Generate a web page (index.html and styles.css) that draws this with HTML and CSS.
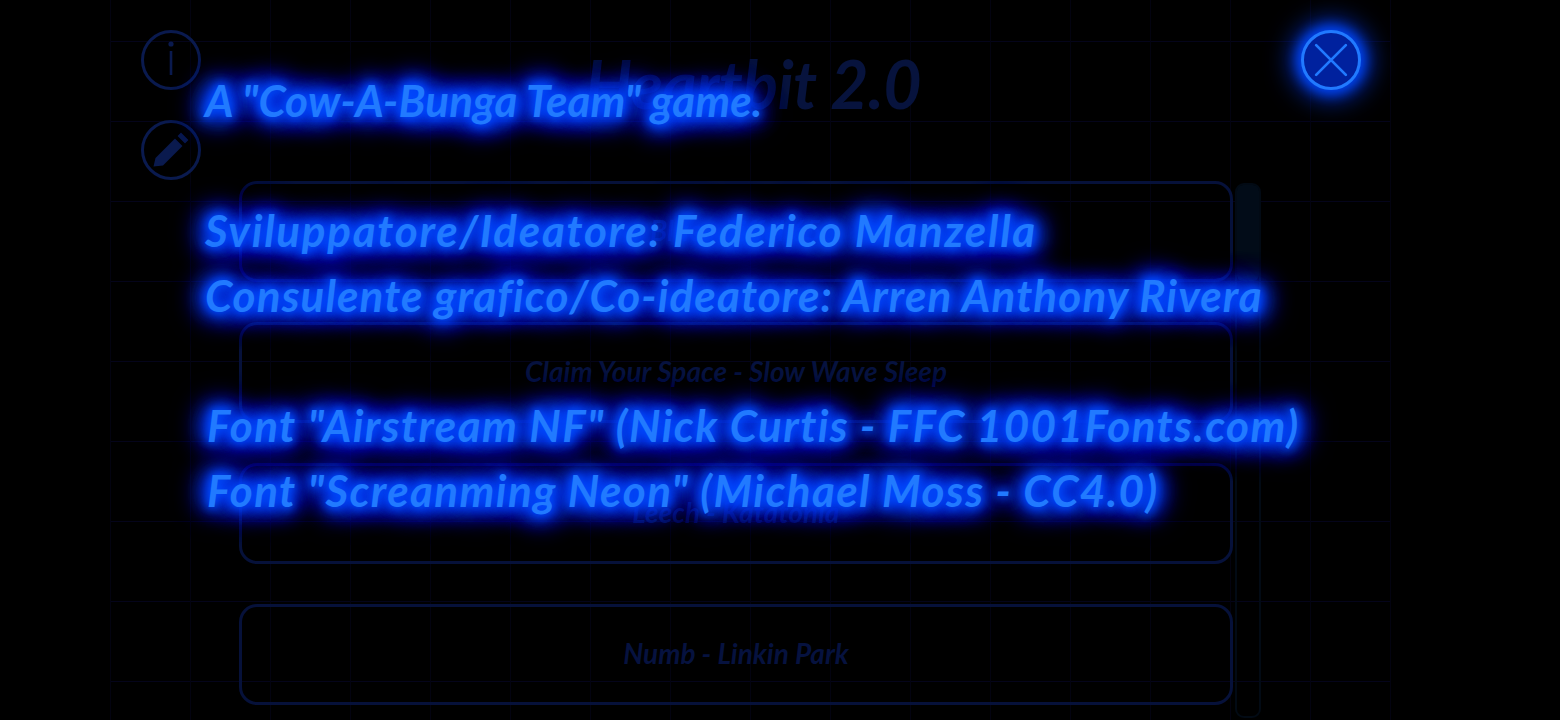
FILE: index.html
```html
<!DOCTYPE html>
<html lang="it">
<head>
<meta charset="utf-8">
<title>Heartbit 2.0</title>
<link rel="stylesheet" href="styles.css">
</head>
<body>
<div class="grid"></div>
<div class="page">
  <div class="rail">
    <div class="round">
      <svg viewBox="0 0 60 60" class="icon"><circle cx="30" cy="30" r="28.5" class="ring"/><circle cx="30" cy="14" r="2.6" class="fill"/><rect x="28.7" y="21" width="2.6" height="24" class="fill"/></svg>
    </div>
    <div class="round">
      <svg viewBox="0 0 60 60" class="icon"><circle cx="30" cy="30" r="28.5" class="ring"/><path d="M12.5 46.5 L14.5 38 L34 18.5 L41.5 26 L22 45.5 Z M36.5 16 L40 12.5 L47.5 20 L44 23.5 Z" class="fill"/></svg>
    </div>
  </div>
  <main class="main">
    <h1 class="title">Heartbit 2.0</h1>
    <div class="scroller">
      <ul class="songs">
        <li class="song">Blue - Eiffel 65</li>
        <li class="song">Claim Your Space - Slow Wave Sleep</li>
        <li class="song">Leech - Katatonia</li>
        <li class="song">Numb - Linkin Park</li>
      </ul>
      <div class="bar"><div class="thumb"></div></div>
    </div>
  </main>
</div>
<section class="credits">
  <p class="line l1 gap">A "Cow-A-Bunga Team" game.</p>
  <p class="line l2">Sviluppatore/Ideatore: Federico Manzella</p>
  <p class="line l3 gap">Consulente grafico/Co-ideatore: Arren Anthony Rivera</p>
  <p class="line l4">Font "Airstream NF" (Nick Curtis - FFC 1001Fonts.com)</p>
  <p class="line l5">Font "Screanming Neon" (Michael Moss - CC4.0)</p>
</section>
<button class="close" aria-label="Chiudi">
  <svg viewBox="0 0 60 60" class="icon"><path d="M13.5 13.5 L46.5 46.5 M46.5 13.5 L13.5 46.5" class="cross"/></svg>
</button>
</body>
</html>
```
FILE: styles.css
```css
* { box-sizing: border-box; }
html, body { margin: 0; height: 720px; overflow: hidden; background: #000; }
body { position: relative; font-family: "Lato", "Noto Sans", sans-serif; }

.grid {
  position: absolute;
  left: 110px;
  top: 0;
  width: 1281px;
  height: 720px;
  background-image:
    linear-gradient(to right, #030310 1px, transparent 1px),
    linear-gradient(to bottom, #04041a 1px, transparent 1px);
  background-size: 80px 80px;
  background-position: 0 0, 0 41px;
}

.page { position: relative; display: flex; padding: 30px 0 0 141px; }

.rail { display: flex; flex-direction: column; gap: 30px; width: 60px; flex: none; }
.round { width: 60px; height: 60px; }
.icon { display: block; width: 100%; height: 100%; }
.ring { fill: none; stroke: #0a1a4e; stroke-width: 3; }
.fill { fill: #0a1a4e; }

.main { margin-left: 38px; width: 1022px; }
.title {
  margin: 12px 0 0;
  height: 92px;
  padding-left: 346px;
  font-size: 66px;
  line-height: 84px;
  font-weight: 700;
  font-style: italic;
  letter-spacing: -0.6px;
  color: #07133d;
  white-space: nowrap;
}
.scroller { display: flex; gap: 2px; margin-top: 47px; }
.songs { list-style: none; margin: 0; padding: 0; width: 994px; flex: none; display: flex; flex-direction: column; gap: 40px; }
.song {
  height: 101px;
  padding-bottom: 4px;
  border: 3px solid #06113a;
  border-radius: 18px;
  display: flex;
  align-items: center;
  justify-content: center;
  font-size: 28px;
  font-style: italic;
  font-weight: 700;
  color: #06123f;
}
.bar {
  width: 26px;
  height: 535px;
  flex: none;
  margin-top: 2px;
  border: 2px solid #020a14;
  border-radius: 9px;
}
.thumb { height: 96px; background: #020c18; border-radius: 6px; }

.credits { position: absolute; left: 205px; top: 68px; }
.line {
  margin: 0;
  height: 65px;
  font-size: 44px;
  line-height: 65px;
  font-weight: 700;
  font-style: italic;
  white-space: nowrap;
  color: #217aff;
  text-shadow:
    0 0 8px #0050ff, 0 0 12px #0048ff,
    0 0 18px #0040ff, 0 0 22px #0040ff, 0 0 24px #0038ff,
    0 0 28px #0038ff, 0 0 32px #0034ff, 0 0 34px #0034ff, 0 0 36px #0030ff;
}
.gap { margin-bottom: 65px; }
.l1 { letter-spacing: 0.1px; }
.l2 { letter-spacing: 1.7px; }
.l3 { letter-spacing: 1.1px; }
.l4 { letter-spacing: 1.4px; margin-left: 2px; }
.l5 { letter-spacing: 1.4px; margin-left: 2px; }

.close {
  position: absolute;
  left: 1301px;
  top: 30px;
  width: 60px;
  height: 60px;
  padding: 0;
  border: 3px solid #217aff;
  border-radius: 50%;
  background: #00219e;
  box-shadow: 0 0 12px 4px #0044f0, 0 0 26px 9px #0030c8;
}
.cross { fill: none; stroke: #217aff; stroke-width: 3; stroke-linecap: round; }
```
